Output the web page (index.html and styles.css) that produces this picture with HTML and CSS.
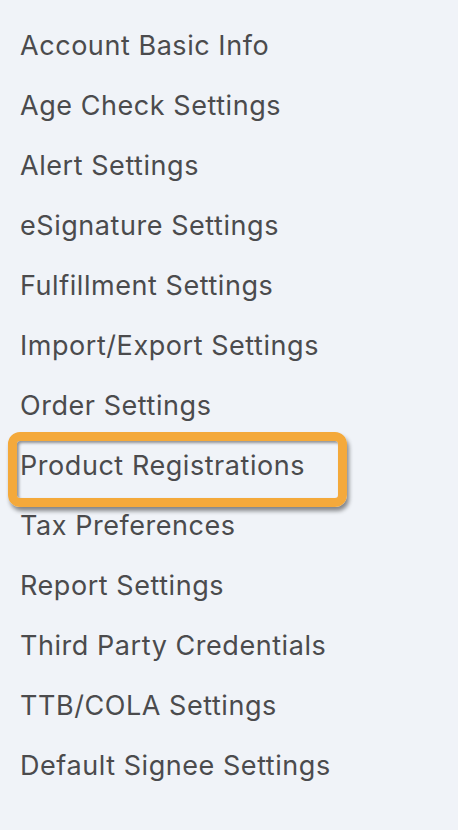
FILE: index.html
```html
<!DOCTYPE html>
<html lang="en">
<head>
<meta charset="utf-8">
<title>Settings</title>
<link rel="stylesheet" href="styles.css">
</head>
<body>
<nav class="settings-nav">
  <ul class="settings-list">
    <li class="settings-item">Account Basic Info</li>
    <li class="settings-item">Age Check Settings</li>
    <li class="settings-item">Alert Settings</li>
    <li class="settings-item">eSignature Settings</li>
    <li class="settings-item">Fulfillment Settings</li>
    <li class="settings-item">Import/Export Settings</li>
    <li class="settings-item">Order Settings</li>
    <li class="settings-item settings-item--highlight">Product Registrations</li>
    <li class="settings-item">Tax Preferences</li>
    <li class="settings-item">Report Settings</li>
    <li class="settings-item">Third Party Credentials</li>
    <li class="settings-item">TTB/COLA Settings</li>
    <li class="settings-item">Default Signee Settings</li>
  </ul>
</nav>
</body>
</html>
```
FILE: styles.css
```css
html, body {
  margin: 0;
  padding: 0;
  background: #f0f3f8;
}

body {
  width: 458px;
  height: 830px;
  overflow: hidden;
  font-family: Inter, "Noto Sans", "Liberation Sans", sans-serif;
  color: #4b4b4d;
}

.settings-nav {
  padding-top: 16px;
}

.settings-list {
  list-style: none;
  margin: 0;
  padding: 0 0 0 20px;
}

.settings-item {
  height: 60px;
  line-height: 60px;
  font-size: 27px;
  letter-spacing: 0.55px;
  white-space: nowrap;
}

.settings-item--highlight {
  position: relative;
}

.settings-item--highlight::after {
  content: "";
  position: absolute;
  left: -12px;
  top: -4px;
  width: 321px;
  height: 57px;
  border: 9px solid #f4a93b;
  border-radius: 12px;
  box-shadow: 2px 4px 4px rgba(0, 0, 0, 0.45), inset 2px 2px 3px rgba(0, 0, 0, 0.4);
}
```
